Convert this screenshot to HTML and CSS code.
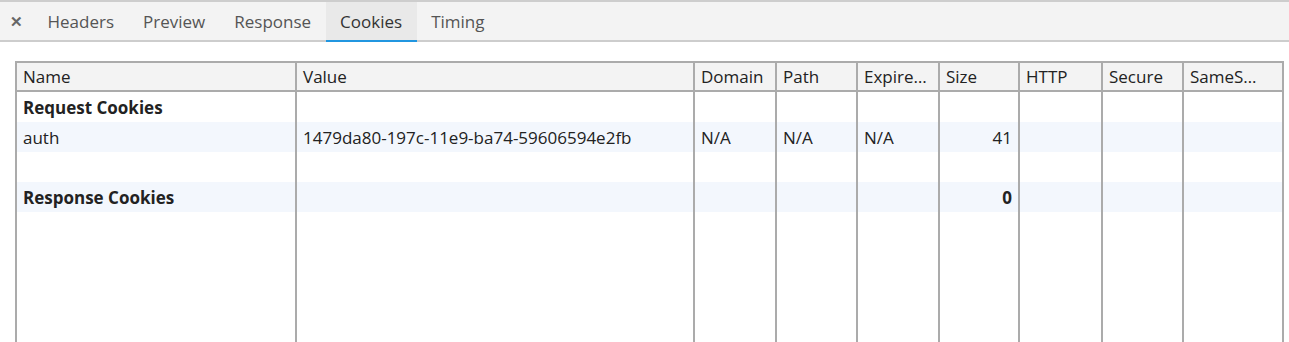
FILE: index.html
```html
<!DOCTYPE html>
<html lang="en">
<head>
  <meta charset="UTF-8" />
  <title>Cookies</title>
  <link rel="stylesheet" href="styles.css">
</head>
<body>
  <div class="tabbar">
    <span class="close">&#x2715;</span>
    <span class="tab">Headers</span>
    <span class="tab">Preview</span>
    <span class="tab">Response</span>
    <span class="tab selected">Cookies</span>
    <span class="tab">Timing</span>
  </div>

  <div class="panel">
    <table class="cookies">
      <colgroup>
        <col style="width:280px"><col style="width:398px"><col style="width:82px">
        <col style="width:81px"><col style="width:82px"><col style="width:80px">
        <col style="width:83px"><col style="width:81px"><col>
      </colgroup>
      <thead>
        <tr>
          <th>Name</th><th>Value</th><th>Domain</th><th>Path</th><th>Expire…</th>
          <th>Size</th><th>HTTP</th><th>Secure</th><th>SameS…</th>
        </tr>
      </thead>
      <tbody>
        <tr class="section"><td>Request Cookies</td><td></td><td></td><td></td><td></td><td class="num"></td><td></td><td></td><td></td></tr>
        <tr class="alt"><td>auth</td><td>1479da80-197c-11e9-ba74-59606594e2fb</td><td>N/A</td><td>N/A</td><td>N/A</td><td class="num">41</td><td></td><td></td><td></td></tr>
        <tr><td></td><td></td><td></td><td></td><td></td><td></td><td></td><td></td><td></td></tr>
        <tr class="section alt"><td>Response Cookies</td><td></td><td></td><td></td><td></td><td class="num">0</td><td></td><td></td><td></td></tr>
        <tr class="filler"><td></td><td></td><td></td><td></td><td></td><td></td><td></td><td></td><td></td></tr>
      </tbody>
    </table>
  </div>
</body>
</html>
```

FILE: styles.css
```css
body {
  margin: 0;
  font-family: 'Open Sans', 'Noto Sans', sans-serif;
  background: #fff;
  color: #222;
  overflow: hidden;
}
.tabbar {
  display: flex;
  align-items: stretch;
  height: 38px;
  background: #f3f3f3;
  border-top: 2px solid #cdcdcd;
  border-bottom: 2px solid #cdcdcd;
}
.close {
  width: 32px;
  display: flex;
  align-items: center;
  justify-content: center;
  font-size: 15px;
  font-weight: 700;
  color: #666;
  margin-right: 1px;
}
.tab {
  display: flex;
  align-items: center;
  padding: 0 14.5px;
  font-size: 17px;
  color: #555;
  position: relative;
}
.tab.selected {
  background: #e9e9e9;
  color: #333;
}
.tab.selected::after {
  content: '';
  position: absolute;
  left: 0;
  right: 0;
  bottom: -2px;
  height: 2px;
  background: #2196e0;
}
.panel {
  padding: 19px 5px 0 15px;
}
.cookies {
  width: 100%;
  border-collapse: collapse;
  table-layout: fixed;
  font-size: 17px;
}
.cookies th,
.cookies td {
  border-left: 2px solid #ababab;
  border-right: 2px solid #ababab;
  padding: 0 6px;
  height: 30px;
  text-align: left;
  white-space: nowrap;
  overflow: hidden;
}
.cookies th {
  font-weight: 400;
  background: #f3f3f3;
  border-top: 2px solid #ababab;
  border-bottom: 2px solid #ababab;
  height: 27px;
}
.cookies tr.alt td {
  background: #f3f7fd;
}
.cookies tr.section td {
  font-weight: 700;
}
.cookies td.num {
  text-align: right;
}
.cookies tr.filler td {
  height: 140px;
}
```
